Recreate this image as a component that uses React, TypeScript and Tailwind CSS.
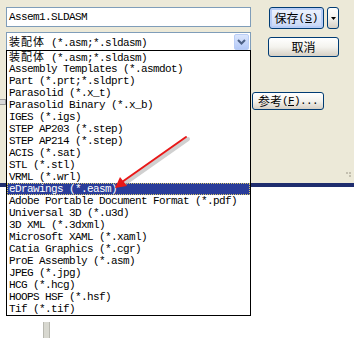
const mono = "font-['Liberation_Mono','Noto_Sans_CJK_SC',monospace]";

const items: { cjk?: string; text: string }[] = [
  { cjk: "装配体", text: " (*.asm;*.sldasm)" },
  { text: "Assembly Templates (*.asmdot)" },
  { text: "Part (*.prt;*.sldprt)" },
  { text: "Parasolid (*.x_t)" },
  { text: "Parasolid Binary (*.x_b)" },
  { text: "IGES (*.igs)" },
  { text: "STEP AP203 (*.step)" },
  { text: "STEP AP214 (*.step)" },
  { text: "ACIS (*.sat)" },
  { text: "STL (*.stl)" },
  { text: "VRML (*.wrl)" },
  { text: "eDrawings (*.easm)" },
  { text: "Adobe Portable Document Format (*.pdf)" },
  { text: "Universal 3D (*.u3d)" },
  { text: "3D XML (*.3dxml)" },
  { text: "Microsoft XAML (*.xaml)" },
  { text: "Catia Graphics (*.cgr)" },
  { text: "ProE Assembly (*.asm)" },
  { text: "JPEG (*.jpg)" },
  { text: "HCG (*.hcg)" },
  { text: "HOOPS HSF (*.hsf)" },
  { text: "Tif (*.tif)" },
];

const SELECTED = 11;

function XpButton({ children, className = "" }: { children: React.ReactNode; className?: string }) {
  return (
    <div
      className={`flex items-center justify-center rounded-[3px] border border-[#003c74] bg-gradient-to-b from-white via-[#f4f3ee] to-[#d6d0c5] text-[12px] leading-[14px] text-black ${className}`}
    >
      {children}
    </div>
  );
}

function Label({ cjk, text }: { cjk?: string; text: string }) {
  return (
    <span className="whitespace-pre leading-[12px]">
      {cjk && <span className="font-['Noto_Sans_CJK_SC',sans-serif] text-[11px] leading-[12px] tracking-[1px]">{cjk}</span>}
      {text}
    </span>
  );
}

export default function App() {
  return (
    <div className={`relative flex h-[338px] w-[354px] flex-col overflow-hidden bg-white ${mono}`}>
      {/* dialog body */}
      <div className="h-[183px] bg-[#ece9d8]">
        <div className="flex pt-[7px]">
          <div className="ml-[6px] flex w-[245px] flex-col">
            <div className="flex h-[20px] items-center border border-[#7f9db9] bg-white pl-[2px] text-[11px] leading-[12px] tracking-[-0.6px]">
              Assem1.SLDASM
            </div>
            <div className="mt-[5px] flex h-[19px] items-center justify-between border border-b-0 border-[#7f9db9] bg-white pl-[2px] text-[11px] leading-[12px] tracking-[-0.6px]">
              <Label cjk="装配体" text=" (*.asm;*.sldasm)" />
              <div className="mr-[1px] flex h-[16px] w-[15px] items-center justify-center rounded-[2px] border border-[#b9cdf6] bg-gradient-to-b from-[#dbe6fd] to-[#b4c9f7]">
                <svg width="9" height="6" viewBox="0 0 9 6">
                  <path d="M1 1 L4.5 4.5 L8 1" fill="none" stroke="#4d6185" strokeWidth="2" />
                </svg>
              </div>
            </div>
          </div>
          <div className="ml-[18px] flex flex-col">
            <div className="flex">
              <XpButton className="h-[22px] w-[55px] !bg-gradient-to-b !from-[#eef3fd] !via-[#dde7fb] !to-[#c4d4f5] shadow-[inset_0_0_0_2px_#b8cdf7]">
                <span className="font-['Noto_Sans_CJK_SC',sans-serif]">保存</span>
                <span className={`${mono} text-[11px]`}>
                  (<span className="underline">S</span>)
                </span>
              </XpButton>
              <XpButton className="ml-[3px] h-[22px] w-[12px]">
                <svg width="5" height="3" viewBox="0 0 5 3">
                  <path d="M0 0 H5 L2.5 3 Z" fill="#000" />
                </svg>
              </XpButton>
            </div>
            <XpButton className="ml-[-1px] mt-[8px] h-[20px] w-[71px]">
              <span className="font-['Noto_Sans_CJK_SC',sans-serif]">取消</span>
            </XpButton>
          </div>
        </div>
        <div className="mt-[35px] flex items-start">
          <div className="mt-[7px] h-[6px] w-[6px] border-y border-r border-[#9a9a9a] bg-[#d8d8d8]" />
          <XpButton className="ml-[246px] h-[18px] w-[72px]">
            <span className="font-['Noto_Sans_CJK_SC',sans-serif]">参考</span>
            <span className={`${mono} text-[11px] tracking-[-0.6px]`}>
              (<span className="underline">F</span>)...
            </span>
          </XpButton>
        </div>
        <div className="ml-auto mr-[3px] mt-[62px] flex w-[6px] flex-wrap justify-end gap-[1px]">
          <span className="h-[2px] w-[2px] bg-[#c4c0b0]" />
          <span className="h-[2px] w-[2px] bg-[#c4c0b0]" />
          <span className="h-[2px] w-[2px] bg-[#c4c0b0]" />
        </div>
      </div>
      <div className="h-[4px] bg-[#1f2d6e]" />
      <div className="flex-1 bg-white">
        <div className="ml-[43px] mt-[135px] h-[16px] w-[7px] border-x border-[#b8b8b0] bg-[#d8d8d0]" />
      </div>

      {/* open dropdown list */}
      <div className="absolute left-[6px] top-[50px] w-[245px] border border-black bg-white pl-[2px] text-[11px] tracking-[-0.6px] text-black">
        {items.map((it, i) => (
          <div
            key={i}
            className={`flex h-[12px] items-center leading-[12px] ${
              i === SELECTED ? "-ml-[2px] bg-[#2a3d9a] pl-[2px] text-white outline-1 -outline-offset-1 outline-dotted outline-[#d6c66a]" : ""
            }`}
          >
            <Label cjk={it.cjk} text={it.text} />
          </div>
        ))}
      </div>

      {/* annotation arrow */}
      <svg className="absolute left-0 top-0" width="354" height="338" viewBox="0 0 354 338">
        <path d="M188 139 L124 184" stroke="#b0b0b0" strokeOpacity="0.6" strokeWidth="4" strokeLinecap="round" />
        <path d="M186 137 L122 182" stroke="#e81818" strokeWidth="2" strokeLinecap="round" />
        <path d="M115 188 L120 177 L127 186 Z" fill="#e81818" />
      </svg>
    </div>
  );
}
